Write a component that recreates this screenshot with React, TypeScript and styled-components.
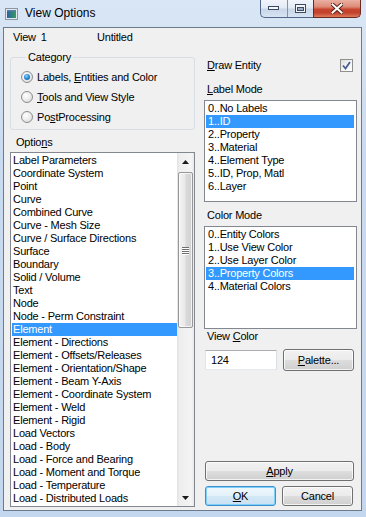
import React from "react";
import styled, { createGlobalStyle, css } from "styled-components";

const GlobalStyle = createGlobalStyle`
  html, body { margin: 0; padding: 0; }
  body {
    font-family: "Liberation Sans", Arial, sans-serif;
    font-size: 11px;
    letter-spacing: -0.2px;
    color: #000;
  }
  #root { width: 366px; height: 517px; }
`;

const Window = styled.div`
  width: 366px;
  height: 517px;
  box-sizing: border-box;
  display: flex;
  flex-direction: column;
  overflow: hidden;
  background: linear-gradient(180deg, #d9e6f5 0%, #c9dbf0 30%, #c3d7ee 100%);
`;

const TitleBar = styled.div`
  height: 27px;
  flex: none;
  display: flex;
  align-items: flex-start;
  padding: 0 5px 0 5px;
`;

const TitleIcon = styled.svg`
  flex: none;
  margin-top: 8px;
`;

const TitleText = styled.div`
  margin-left: 7px;
  margin-top: 6px;
  font-size: 12px;
  line-height: 15px;
  letter-spacing: 0;
`;

const CaptionGroup = styled.div`
  margin-left: auto;
  display: flex;
  height: 18px;
`;

const MinMaxBox = styled.div`
  display: flex;
  box-sizing: border-box;
  height: 18px;
  border: 1px solid #52678a;
  border-top: none;
  border-right: none;
  border-radius: 0 0 0 5px;
  overflow: hidden;
  background: linear-gradient(180deg, #f1f5fb 0%, #e3ebf5 45%, #c9d7e9 55%, #d6e3f2 100%);
`;

const CapButton = styled.div<{ $w: number; $divider?: boolean }>`
  width: ${(p) => p.$w}px;
  height: 17px;
  display: flex;
  align-items: center;
  justify-content: center;
  box-sizing: border-box;
  ${(p) => p.$divider && css`border-right: 1px solid #7f93b0;`}
`;

const CloseButton = styled.div`
  width: 48px;
  height: 18px;
  box-sizing: border-box;
  border: 1px solid #6b2a20;
  border-top: none;
  border-radius: 0 0 5px 0;
  display: flex;
  align-items: center;
  justify-content: center;
  background: linear-gradient(180deg, #eab0a3 0%, #dc8b77 40%, #c7452f 55%, #c2412c 75%, #dd7b5d 100%);
`;

const Client = styled.div`
  flex: 1;
  margin: 0 4px 6px 3px;
  border: 1px solid #6c7a8d;
  background: #f0f0f0;
  padding: 2px 4px 3px 6px;
  display: flex;
  flex-direction: column;
  min-height: 0;
`;

const Header = styled.div`
  height: 14px;
  line-height: 14px;
  display: flex;
  padding-left: 3px;
  flex: none;
`;

const HeaderCell = styled.div<{ $w?: number }>`
  ${(p) => p.$w && css`width: ${p.$w}px; flex: none;`}
  display: flex;
  gap: 5px;
`;

const Main = styled.div`
  flex: 1;
  margin-top: 7px;
  display: flex;
  gap: 9px;
  min-height: 0;
`;

const LeftCol = styled.div`
  width: 185px;
  flex: none;
  display: flex;
  flex-direction: column;
  min-height: 0;
`;

const GroupBox = styled.fieldset`
  margin: 0;
  min-width: 0;
  box-sizing: border-box;
  width: 185px;
  padding: 3px 0 2px 10px;
  border: 1px solid #d5dfe5;
  border-radius: 3px;
`;

const Legend = styled.legend`
  padding: 0 2px;
  margin-left: 5px;
  line-height: 13px;
`;

const RadioRow = styled.div`
  height: 20px;
  display: flex;
  align-items: center;
  gap: 4px;
`;

const RadioCircle = styled.span<{ $on?: boolean }>`
  width: 12px;
  height: 12px;
  box-sizing: border-box;
  border-radius: 50%;
  border: 1px solid #8b8d8f;
  background: radial-gradient(circle at 40% 35%, #ffffff 0%, #eeeeee 45%, #d4d4d4 100%);
  display: flex;
  align-items: center;
  justify-content: center;
  flex: none;
  &::after {
    content: "";
    display: ${(p) => (p.$on ? "block" : "none")};
    width: 6px;
    height: 6px;
    border-radius: 50%;
    background: radial-gradient(circle at 40% 35%, #8fd6ff 0%, #2c8fd8 45%, #0d4d8c 100%);
  }
`;

const U = styled.span`
  text-decoration: underline;
  text-underline-offset: 1px;
`;

const FieldLabel = styled.div<{ $mt: number; $pl?: number }>`
  margin-top: ${(p) => p.$mt}px;
  padding-left: ${(p) => p.$pl ?? 3}px;
  line-height: 13px;
  height: 13px;
  flex: none;
`;

const ListBox = styled.div<{ $h?: number; $mt?: number }>`
  box-sizing: border-box;
  border: 1px solid #828790;
  background: #fff;
  display: flex;
  overflow: hidden;
  margin-top: ${(p) => p.$mt ?? 0}px;
  ${(p) => (p.$h ? css`height: ${p.$h}px; flex: none;` : css`flex: 1; min-height: 0;`)}
`;

const Items = styled.div<{ $pr: number }>`
  flex: 1;
  min-width: 0;
  padding: 1px ${(p) => p.$pr}px 1px 1px;
  display: flex;
  flex-direction: column;
`;

const Item = styled.div<{ $sel?: boolean; $pl: number }>`
  height: 13px;
  line-height: 13px;
  padding-left: ${(p) => p.$pl}px;
  white-space: nowrap;
  flex: none;
  ${(p) =>
    p.$sel &&
    css`
      background: #3399ff;
      color: #fff;
    `}
`;

const ScrollBar = styled.div`
  width: 17px;
  flex: none;
  display: flex;
  flex-direction: column;
  background: linear-gradient(90deg, #e2e2e2 0%, #eeeeee 15%, #f4f4f4 85%, #e9e9e9 100%);
`;

const ScrollArrow = styled.div`
  height: 17px;
  flex: none;
  display: flex;
  align-items: center;
  justify-content: center;
`;

const Track = styled.div`
  flex: 1;
  display: flex;
  flex-direction: column;
  align-items: center;
`;

const Thumb = styled.div`
  margin-top: 2px;
  width: 15px;
  height: 156px;
  box-sizing: border-box;
  border: 1px solid #979797;
  border-radius: 2px;
  background: linear-gradient(90deg, #f3f3f3 0%, #e9e9e9 45%, #d9d9d9 55%, #d2d2d2 100%);
  box-shadow: inset 0 0 0 1px rgba(255, 255, 255, 0.7);
  display: flex;
  align-items: center;
  justify-content: center;
`;

const Grip = styled.div`
  width: 7px;
  display: flex;
  flex-direction: column;
  gap: 1px;
  & > span {
    display: block;
    height: 1px;
    background: #6e6e6e;
    box-shadow: 0 1px 0 #ffffff;
  }
`;

const RightCol = styled.div`
  width: 153px;
  flex: none;
  display: flex;
  flex-direction: column;
`;

const CheckRow = styled.div`
  margin-top: 7px;
  height: 14px;
  line-height: 14px;
  display: flex;
  align-items: center;
  justify-content: space-between;
  padding: 0 4px 0 3px;
  flex: none;
`;

const CheckBox = styled.span`
  width: 13px;
  height: 13px;
  box-sizing: border-box;
  border: 1px solid #8e8f8f;
  background: linear-gradient(135deg, #dcdcdc 0%, #f4f4f4 50%, #ffffff 100%);
  display: flex;
  align-items: center;
  justify-content: center;
`;

const ButtonRow = styled.div<{ $mt?: number; $mb?: number }>`
  display: flex;
  align-items: center;
  gap: 6px;
  padding: 0 3px 0 1px;
  margin-top: ${(p) => p.$mt ?? 0}px;
  margin-bottom: ${(p) => p.$mb ?? 0}px;
  flex: none;
`;

const TextInput = styled.div`
  width: 72px;
  height: 20px;
  box-sizing: border-box;
  border: 1px solid;
  border-color: #abadb3 #dbdfe6 #e3e9ef #e2e3ea;
  background: #fff;
  padding-left: 5px;
  line-height: 18px;
`;

const Spacer = styled.div`
  flex: 1;
`;

const Button = styled.div<{ $w: number; $h: number; $default?: boolean }>`
  width: ${(p) => p.$w}px;
  height: ${(p) => p.$h}px;
  box-sizing: border-box;
  border: 1px solid #707070;
  border-radius: 3px;
  background: linear-gradient(180deg, #f2f2f2 0%, #ebebeb 48%, #dddddd 52%, #cfcfcf 100%);
  box-shadow: inset 0 0 0 1px rgba(255, 255, 255, 0.75);
  display: flex;
  align-items: center;
  justify-content: center;
  line-height: 13px;
  flex: none;
  ${(p) =>
    p.$default &&
    css`
      border-color: #3c8fd1;
      box-shadow: inset 0 0 0 1px #7fd0f6;
      background: linear-gradient(180deg, #eef7fc 0%, #e4f1fa 48%, #d3e8f6 52%, #c8e1f3 100%);
    `}
`;

const OPTIONS = [
  "Label Parameters",
  "Coordinate System",
  "Point",
  "Curve",
  "Combined Curve",
  "Curve - Mesh Size",
  "Curve / Surface Directions",
  "Surface",
  "Boundary",
  "Solid / Volume",
  "Text",
  "Node",
  "Node - Perm Constraint",
  "Element",
  "Element - Directions",
  "Element - Offsets/Releases",
  "Element - Orientation/Shape",
  "Element - Beam Y-Axis",
  "Element - Coordinate System",
  "Element - Weld",
  "Element - Rigid",
  "Load Vectors",
  "Load - Body",
  "Load - Force and Bearing",
  "Load - Moment and Torque",
  "Load - Temperature",
  "Load - Distributed Loads",
];

const LABEL_MODES = [
  "0..No Labels",
  "1..ID",
  "2..Property",
  "3..Material",
  "4..Element Type",
  "5..ID, Prop, Matl",
  "6..Layer",
];

const COLOR_MODES = [
  "0..Entity Colors",
  "1..Use View Color",
  "2..Use Layer Color",
  "3..Property Colors",
  "4..Material Colors",
];

export default function App() {
  return (
    <>
      <GlobalStyle />
      <Window>
        <TitleBar>
          <TitleIcon width="13" height="12" viewBox="0 0 13 12">
            <defs>
              <linearGradient id="ic" x1="0" x2="1" y1="0" y2="0">
                <stop offset="0" stopColor="#2b5f9e" />
                <stop offset="0.5" stopColor="#2f7f8a" />
                <stop offset="1" stopColor="#3b9a4e" />
              </linearGradient>
            </defs>
            <rect x="0.5" y="0.5" width="12" height="11" fill="#e4e9ef" stroke="#8996a5" />
            <rect x="2" y="2" width="9" height="8" fill="url(#ic)" />
            <rect x="2" y="2" width="9" height="1.5" fill="#5a7fa8" />
          </TitleIcon>
          <TitleText>View Options</TitleText>
          <CaptionGroup>
            <MinMaxBox>
              <CapButton $w={27} $divider>
                <svg width="12" height="5" viewBox="0 0 12 5">
                  <rect x="0.5" y="0.5" width="10" height="3" fill="#f4f6f9" stroke="#3a4a62" />
                </svg>
              </CapButton>
              <CapButton $w={25}>
                <svg width="12" height="10" viewBox="0 0 12 10">
                  <rect x="0.5" y="0.5" width="10" height="8" fill="#f4f6f9" stroke="#3a4a62" />
                  <rect x="2.5" y="3.5" width="6" height="3" fill="#9fb1c8" stroke="#3a4a62" />
                </svg>
              </CapButton>
            </MinMaxBox>
            <CloseButton>
              <svg width="12" height="11" viewBox="0 0 12 11">
                <path
                  d="M1.5 1.5 L10.5 9.5 M10.5 1.5 L1.5 9.5"
                  stroke="#5a2018"
                  strokeWidth="4"
                  strokeLinecap="square"
                />
                <path
                  d="M1.5 1.5 L10.5 9.5 M10.5 1.5 L1.5 9.5"
                  stroke="#ffffff"
                  strokeWidth="2"
                  strokeLinecap="square"
                />
              </svg>
            </CloseButton>
          </CaptionGroup>
        </TitleBar>

        <Client>
          <Header>
            <HeaderCell $w={84}>
              <span>View</span>
              <span>1</span>
            </HeaderCell>
            <HeaderCell>Untitled</HeaderCell>
          </Header>

          <Main>
            <LeftCol>
              <GroupBox>
                <Legend>Category</Legend>
                <RadioRow>
                  <RadioCircle $on />
                  <span>
                    Labels, <U>E</U>ntities and Color
                  </span>
                </RadioRow>
                <RadioRow>
                  <RadioCircle />
                  <span>
                    <U>T</U>ools and View Style
                  </span>
                </RadioRow>
                <RadioRow>
                  <RadioCircle />
                  <span>
                    Po<U>s</U>tProcessing
                  </span>
                </RadioRow>
              </GroupBox>

              <FieldLabel $mt={6} $pl={6}>
                Optio<U>n</U>s
              </FieldLabel>
              <ListBox $mt={3}>
                <Items $pr={0}>
                  {OPTIONS.map((o) => (
                    <Item key={o} $pl={1} $sel={o === "Element"}>
                      {o}
                    </Item>
                  ))}
                </Items>
                <ScrollBar>
                  <ScrollArrow>
                    <svg width="7" height="4" viewBox="0 0 7 4">
                      <path d="M3.5 0 L7 4 L0 4 Z" fill="#1a1a1a" />
                    </svg>
                  </ScrollArrow>
                  <Track>
                    <Thumb>
                      <Grip>
                        <span />
                        <span />
                        <span />
                        <span />
                      </Grip>
                    </Thumb>
                  </Track>
                  <ScrollArrow>
                    <svg width="7" height="4" viewBox="0 0 7 4">
                      <path d="M0 0 L7 0 L3.5 4 Z" fill="#1a1a1a" />
                    </svg>
                  </ScrollArrow>
                </ScrollBar>
              </ListBox>
            </LeftCol>

            <RightCol>
              <CheckRow>
                <span>
                  <U>D</U>raw Entity
                </span>
                <CheckBox>
                  <svg width="9" height="9" viewBox="0 0 9 9">
                    <path
                      d="M1 4.5 L3.5 7.5 L8 1"
                      fill="none"
                      stroke="#4a5f8f"
                      strokeWidth="1.8"
                    />
                  </svg>
                </CheckBox>
              </CheckRow>

              <FieldLabel $mt={11}>
                <U>L</U>abel Mode
              </FieldLabel>
              <ListBox $h={102} $mt={4}>
                <Items $pr={2}>
                  {LABEL_MODES.map((o) => (
                    <Item key={o} $pl={2} $sel={o === "1..ID"}>
                      {o}
                    </Item>
                  ))}
                </Items>
              </ListBox>

              <FieldLabel $mt={7}>Color Mode</FieldLabel>
              <ListBox $h={103} $mt={4}>
                <Items $pr={2}>
                  {COLOR_MODES.map((o) => (
                    <Item key={o} $pl={2} $sel={o === "3..Property Colors"}>
                      {o}
                    </Item>
                  ))}
                </Items>
              </ListBox>

              <FieldLabel $mt={1}>
                View <U>C</U>olor
              </FieldLabel>
              <ButtonRow $mt={6}>
                <TextInput>124</TextInput>
                <Button $w={71} $h={22}>
                  <span>
                    <U>P</U>alette...
                  </span>
                </Button>
              </ButtonRow>

              <Spacer />

              <ButtonRow $mb={5}>
                <Button $w={149} $h={20}>
                  <span>
                    <U>A</U>pply
                  </span>
                </Button>
              </ButtonRow>
              <ButtonRow $mb={1}>
                <Button $w={71} $h={20} $default>
                  <span>
                    <U>O</U>K
                  </span>
                </Button>
                <Button $w={71} $h={20}>
                  Cancel
                </Button>
              </ButtonRow>
            </RightCol>
          </Main>
        </Client>
      </Window>
    </>
  );
}
